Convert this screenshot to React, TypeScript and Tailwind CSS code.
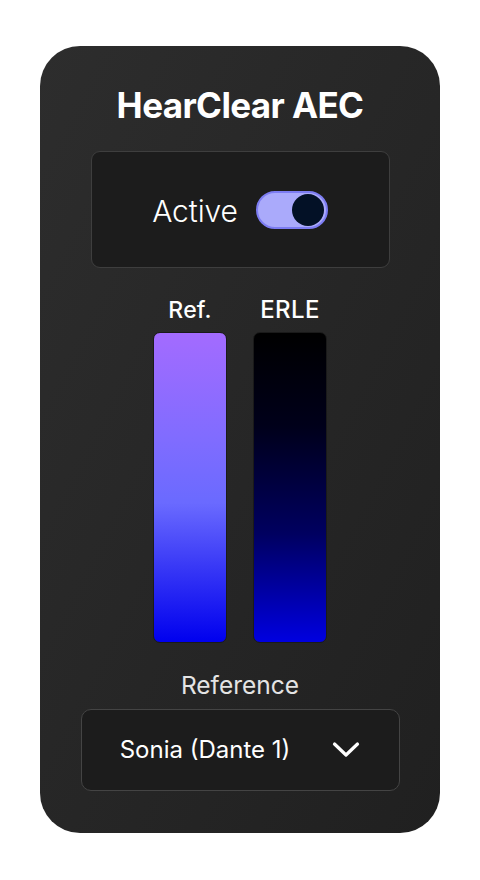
import React from "react";

export default function App() {
  return (
    <div className="min-h-[880px] w-full bg-white flex justify-center pt-[46px]" style={{ fontFamily: "Inter, 'Noto Sans', sans-serif" }}>
      <div className="w-[400px] h-[787px] rounded-[40px] bg-gradient-to-br from-[#2d2d2d] to-[#202020] flex flex-col items-center">
        <h1 className="mt-[38px] h-[42px] text-[35px] leading-[42px] font-bold text-white tracking-[-0.6px]">HearClear AEC</h1>
        <div className="mt-[25px] w-[299px] h-[117px] rounded-[9px] bg-[#1c1c1c] border border-[#3e3e3e] flex items-center justify-center gap-[18px]">
          <span className="text-[30px] leading-[36px] font-light text-white tracking-[-0.1px] translate-y-[1px]">Active</span>
          <div className="w-[72px] h-[38px] rounded-full bg-[#aaaafb] border-2 border-[#7c7cf2] flex items-center justify-end pr-[2px]">
            <div className="w-[32px] h-[32px] rounded-full bg-[#031126]" />
          </div>
        </div>
        <div className="mt-[30px] flex gap-[26px]">
          <div className="w-[74px] flex flex-col items-center">
            <span className="h-[24px] leading-[24px] text-[23px] font-medium text-white whitespace-nowrap tracking-[0.2px]">Ref.</span>
            <div className="mt-[10px] w-[74px] h-[311px] rounded-[7px] border border-[#1a1a1a] bg-[linear-gradient(to_bottom,#a36bff_0%,#7f6cff_35%,#6a6aff_55%,#3a3af6_75%,#0000ee_100%)]" />
          </div>
          <div className="w-[74px] flex flex-col items-center">
            <span className="h-[24px] leading-[24px] text-[24px] font-medium text-white whitespace-nowrap tracking-[0.4px]">ERLE</span>
            <div className="mt-[10px] w-[74px] h-[311px] rounded-[7px] border border-[#1a1a1a] bg-[linear-gradient(to_bottom,#000000_0%,#00001a_30%,#000060_65%,#0000e0_100%)]" />
          </div>
        </div>
        <span className="mt-[29px] h-[26px] leading-[26px] text-[24.5px] text-[#e4e4e4]">Reference</span>
        <div className="mt-[11px] w-[319px] h-[82px] rounded-[10px] bg-[#1c1c1c] border border-[#444444] flex items-center justify-center gap-[42px]">
          <span className="text-[24px] text-white">Sonia (Dante 1)</span>
          <svg width="28" height="18" viewBox="0 0 28 18" fill="none">
            <path d="M2.5 3 L14 14 L25.5 3" stroke="white" strokeWidth="3.2" strokeLinecap="round" strokeLinejoin="round" />
          </svg>
        </div>
      </div>
    </div>
  );
}
